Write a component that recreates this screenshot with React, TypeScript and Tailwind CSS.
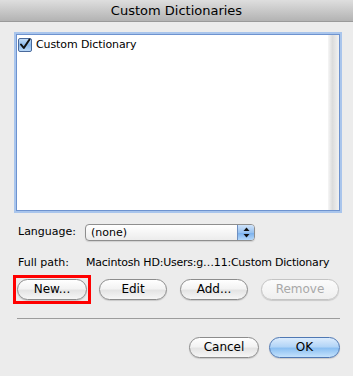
import * as React from "react";

const font = { fontFamily: '"DejaVu Sans", "Lucida Grande", sans-serif' };

function AquaButton({
  label,
  width,
  variant = "normal",
}: {
  label: string;
  width: string;
  variant?: "normal" | "default" | "disabled";
}) {
  const styles =
    variant === "default"
      ? "border-[#4f78b3] bg-[linear-gradient(#dcecfd_0%,#b3d5f7_45%,#8cc0f2_55%,#c4e2fc_100%)] text-black"
      : variant === "disabled"
        ? "border-[#c4c4c4] bg-[linear-gradient(#fbfbfb,#efefef)] text-[#a8a8a8]"
        : "border-[#8c8c8c] bg-[linear-gradient(#ffffff_0%,#f3f3f3_45%,#e4e4e4_55%,#f6f6f6_100%)] text-black";
  return (
    <button
      className={`flex h-[21px] ${width} items-center justify-center rounded-full border text-[12px] shadow-[0_1px_1px_rgba(0,0,0,0.15)] ${styles}`}
    >
      {label}
    </button>
  );
}

function Checkbox() {
  return (
    <svg width="14" height="14" viewBox="0 0 14 14">
      <defs>
        <linearGradient id="cb" x1="0" y1="0" x2="0" y2="1">
          <stop offset="0" stopColor="#c9e0f8" />
          <stop offset="0.5" stopColor="#8ab9ec" />
          <stop offset="1" stopColor="#bfdcf9" />
        </linearGradient>
      </defs>
      <rect x="0.5" y="0.5" width="13" height="13" rx="1.5" fill="url(#cb)" stroke="#4a6a9c" />
      <path d="M3 6.5 L5.8 10 L11.5 1.5" fill="none" stroke="#111" strokeWidth="2" strokeLinecap="round" strokeLinejoin="round" />
    </svg>
  );
}

function Popup() {
  return (
    <div className="flex h-[17px] w-[170px] overflow-hidden rounded-[4px] border border-[#8e8e8e] bg-[linear-gradient(#ffffff,#ececec)] shadow-[0_1px_1px_rgba(0,0,0,0.12)]">
      <span className="flex-1 pl-[5px] text-[11px] leading-[15px]">(none)</span>
      <span className="flex w-[17px] items-center justify-center border-l border-[#6f8fc0] bg-[linear-gradient(#cfe3fa_0%,#98c2f0_50%,#77aeec_51%,#b5d8fa_100%)]">
        <svg width="7" height="11" viewBox="0 0 7 11">
          <path d="M3.5 0.5 L6.5 4 L0.5 4 Z" fill="#111" />
          <path d="M3.5 10.5 L6.5 7 L0.5 7 Z" fill="#111" />
        </svg>
      </span>
    </div>
  );
}

export default function App() {
  return (
    <div className="flex h-[376px] w-[353px] flex-col bg-[#ececec] text-black" style={font}>
      <div className="flex h-[22px] items-center justify-center border-b border-[#9a9a9a] bg-[linear-gradient(#dedede,#b3b3b3)] text-[13px]">
        Custom Dictionaries
      </div>

      <div className="flex flex-col pl-[16px] pr-[13px]">
        <div className="mt-[12px] flex h-[177px] border border-[#6e93cf] bg-white shadow-[0_0_0_2px_#a9c5ec]">
          <div className="flex flex-1 flex-col pl-[1px] pt-[2px]">
            <div className="flex items-center gap-[4px] text-[11px] tracking-[-0.1px]">
              <Checkbox />
              <span>Custom Dictionary</span>
            </div>
          </div>
          <div className="w-[11px] bg-[linear-gradient(90deg,#f6f6f6,#dcdcdc_40%,#f2f2f2)]" />
        </div>

        <div className="mt-[13px] flex items-center text-[11px]">
          <span className="w-[69px] pl-[2px]">Language:</span>
          <Popup />
        </div>

        <div className="mt-[14px] flex items-center text-[11px]">
          <span className="w-[70px] pl-[2px]">Full path:</span>
          <span className="tracking-[-0.22px]">Macintosh HD:Users:g…11:Custom Dictionary</span>
        </div>

        <div className="mt-[3px] flex items-center">
          <div className="-ml-[3px] border-[3px] border-[#ff0000] p-[1px]">
            <AquaButton label="New..." width="w-[70px]" />
          </div>
          <div className="ml-[8px]">
            <AquaButton label="Edit" width="w-[68px]" />
          </div>
          <div className="ml-[13px]">
            <AquaButton label="Add..." width="w-[68px]" />
          </div>
          <div className="ml-[13px]">
            <AquaButton label="Remove" width="w-[78px]" variant="disabled" />
          </div>
        </div>

        <div className="ml-[1px] mt-[14px] h-px bg-[#9c9c9c]" />

        <div className="mt-[18px] flex justify-end gap-[10px]">
          <AquaButton label="Cancel" width="w-[70px]" />
          <AquaButton label="OK" width="w-[71px]" variant="default" />
        </div>
      </div>
    </div>
  );
}
